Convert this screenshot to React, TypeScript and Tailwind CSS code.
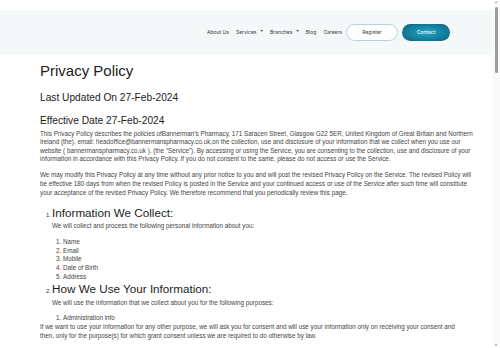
import React from 'react'

const navLinks = [
  { label: 'About Us', caret: false },
  { label: 'Services', caret: true },
  { label: 'Branches', caret: true },
  { label: 'Blog', caret: false },
  { label: 'Careers', caret: false },
]

const collectItems = ['Name', 'Email', 'Mobile', 'Date of Birth', 'Address']

const Header = () => {
  return (
    <div className="mt-[10px] h-[45px] w-[492px] bg-[#f5f8f8] flex items-center justify-end pr-[42px] font-['Inter',sans-serif]">
      <nav className="flex items-center gap-[7px] text-[5px] text-[#3a3a3a]">
        {navLinks.map((l) => (
          <div key={l.label} className="flex items-center gap-[4px]">
            <span>{l.label}</span>
            {l.caret && <span className="text-[2.5px] leading-none">▼</span>}
          </div>
        ))}
      </nav>
      <button className="ml-[4px] w-[52px] h-[17px] rounded-full border border-[#b9d2da] bg-white text-[5px] text-[#3a3a3a] flex items-center justify-center">
        Register
      </button>
      <button className="ml-[4px] w-[48px] h-[17px] rounded-full bg-[radial-gradient(ellipse_at_center,#2aa3c6_0%,#14809f_55%,#0b5f7c_100%)] text-[5px] text-white flex items-center justify-center">
        Contact
      </button>
    </div>
  )
}

const Scrollbar = () => {
  return (
    <div className="absolute top-0 right-0 w-[7px] h-[348px] bg-[#fafafa]">
      <div className="absolute top-[1px] left-[1.5px] text-[3px] leading-none text-[#777]">▲</div>
      <div className="absolute top-[7px] left-[1.5px] w-[3.5px] h-[66px] rounded-full bg-[#9c9c9c]" />
      <div className="absolute bottom-[1px] left-[1.5px] text-[3px] leading-none text-[#777]">▼</div>
    </div>
  )
}

const Para = ({ children, className = '' }: { children: React.ReactNode; className?: string }) => (
  <p className={`text-[6.3px] leading-[8.6px] text-[#444] ${className}`}>{children}</p>
)

const Section = ({ n, title }: { n: number; title: string }) => (
  <div className="flex items-baseline">
    <span className="w-[12px] pl-[6px] text-[6px] text-[#333]">{n}.</span>
    <h3 className="text-[11.7px] leading-[14px] text-[#1c1c1c]">{title}</h3>
  </div>
)

export default function App() {
  return (
    <div className="relative h-[348px] w-[500px] overflow-hidden bg-white font-['Liberation_Sans',Arial,sans-serif]">
      <Header />

      <div className="ml-[40px] w-[436px] pt-[7px]">
        <h1 className="text-[15px] leading-[18px] text-[#1c1c1c]">Privacy Policy</h1>
        <h2 className="mt-[12px] text-[10.2px] leading-[12px] text-[#1c1c1c]">Last Updated On 27-Feb-2024</h2>
        <h2 className="mt-[11px] text-[10.2px] leading-[12px] text-[#1c1c1c]">Effective Date 27-Feb-2024</h2>

        <Para className="mt-[2.5px]">
          This Privacy Policy describes the policies ofBannerman's Pharmacy, 171 Saracen Street, Glasgow G22 5ER, United Kingdom of Great Britain and Northern Ireland (the), email: headoffice@bannermanspharmacy.co.uk,on the collection, use and disclosure of your information that we collect when you use our website ( bannermanspharmacy.co.uk ). (the “Service”). By accessing or using the Service, you are consenting to the collection, use and disclosure of your information in accordance with this Privacy Policy. If you do not consent to the same, please do not access or use the Service.
        </Para>
        <Para className="mt-[7.5px]">
          We may modify this Privacy Policy at any time without any prior notice to you and will post the revised Privacy Policy on the Service. The revised Policy will be effective 180 days from when the revised Policy is posted in the Service and your continued access or use of the Service after such time will constitute your acceptance of the revised Privacy Policy. We therefore recommend that you periodically review this page.
        </Para>

        <div className="mt-[8.5px]">
          <Section n={1} title="Information We Collect:" />
          <Para className="mt-[2.5px] pl-[12px]">We will collect and process the following personal information about you:</Para>
          <ol className="mt-[7.5px] pl-[23px] list-decimal text-[6.3px] leading-[8.6px] text-[#444]">
            {collectItems.map((i) => (
              <li key={i}>{i}</li>
            ))}
          </ol>
        </div>

        <div className="mt-[1px]">
          <Section n={2} title="How We Use Your Information:" />
          <Para className="mt-[2.5px] pl-[12px]">We will use the information that we collect about you for the following purposes:</Para>
          <ol className="mt-[7px] pl-[23px] list-decimal text-[6.3px] leading-[8.6px] text-[#444]">
            <li>Administration info</li>
          </ol>
          <Para className="w-[424px]">
            If we want to use your information for any other purpose, we will ask you for consent and will use your information only on receiving your consent and then, only for the purpose(s) for which grant consent unless we are required to do otherwise by law.
          </Para>
        </div>
      </div>

      <Scrollbar />
    </div>
  )
}
